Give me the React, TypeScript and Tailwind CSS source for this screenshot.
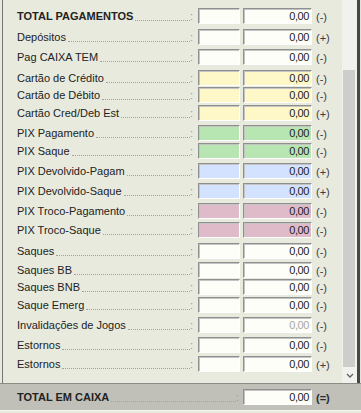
import React from "react";

type Row = {
  label: string;
  bold?: boolean;
  bg: string;
  sign: string;
  mt: string;
  dim?: boolean;
};

const WHITE = "bg-[#fefef8]";
const YELLOW = "bg-[#fef8c8]";
const GREEN = "bg-[#b8e6b3]";
const BLUE = "bg-[#d3e2fe]";
const PINK = "bg-[#dfbbca]";

const rows: Row[] = [
  { label: "TOTAL PAGAMENTOS", bold: true, bg: WHITE, sign: "(-)", mt: "mt-[8px]" },
  { label: "Depósitos", bg: WHITE, sign: "(+)", mt: "mt-[5px]" },
  { label: "Pag CAIXA TEM", bg: WHITE, sign: "(-)", mt: "mt-[4px]" },
  { label: "Cartão de Crédito", bg: YELLOW, sign: "(-)", mt: "mt-[5px]" },
  { label: "Cartão de Débito", bg: YELLOW, sign: "(-)", mt: "mt-[1px]" },
  { label: "Cartão Cred/Deb Est", bg: YELLOW, sign: "(+)", mt: "mt-[2px]" },
  { label: "PIX Pagamento", bg: GREEN, sign: "(-)", mt: "mt-[4px]" },
  { label: "PIX Saque", bg: GREEN, sign: "(-)", mt: "mt-[2px]" },
  { label: "PIX Devolvido-Pagam", bg: BLUE, sign: "(+)", mt: "mt-[4px]" },
  { label: "PIX Devolvido-Saque", bg: BLUE, sign: "(+)", mt: "mt-[4px]" },
  { label: "PIX Troco-Pagamento", bg: PINK, sign: "(-)", mt: "mt-[4px]" },
  { label: "PIX Troco-Saque", bg: PINK, sign: "(-)", mt: "mt-[3px]" },
  { label: "Saques", bg: WHITE, sign: "(-)", mt: "mt-[5px]" },
  { label: "Saques BB", bg: WHITE, sign: "(-)", mt: "mt-[3px]" },
  { label: "Saques BNB", bg: WHITE, sign: "(-)", mt: "mt-[1px]" },
  { label: "Saque Emerg", bg: WHITE, sign: "(-)", mt: "mt-[2px]" },
  { label: "Invalidações de Jogos", bg: WHITE, sign: "(-)", mt: "mt-[4px]", dim: true },
  { label: "Estornos", bg: WHITE, sign: "(-)", mt: "mt-[4px]" },
  { label: "Estornos", bg: WHITE, sign: "(+)", mt: "mt-[3px]" },
];

const boxBase =
  "h-[16px] border border-t-[#8f8f8f] border-l-[#8f8f8f] border-r-[#ffffff] border-b-[#ffffff] shadow-[inset_1px_1px_0_#c4c4c4]";

function Leader({ label, bold }: { label: string; bold?: boolean }) {
  return (
    <div className="flex items-start h-[16px] min-w-0">
      <span
        className={
          "whitespace-nowrap leading-[16px] text-[#222222] " +
          (bold ? "font-bold" : "")
        }
      >
        {label}
      </span>
      <span className="flex-1 ml-[2px] h-[13px] border-b border-dotted border-[#a2a2a2]" />
      <span className="leading-[16px] text-[#9a9a9a]">:</span>
    </div>
  );
}

function RowView({ r }: { r: Row }) {
  return (
    <div className={"flex items-start h-[16px] " + r.mt}>
      <div className="w-[176px]">
        <Leader label={r.label} bold={r.bold} />
      </div>
      <div className={boxBase + " ml-[5px] w-[42px] " + r.bg} />
      <div
        className={
          boxBase +
          " ml-[3px] w-[69px] flex items-start justify-end pr-[2px] " +
          r.bg
        }
      >
        <span
          className={
            "leading-[14px] tracking-[-0.4px] " +
            (r.dim ? "text-[#a6a6a6]" : "text-[#222222]")
          }
        >
          0,00
        </span>
      </div>
      <span className="ml-[4px] leading-[16px] pt-[1px] text-[#3c3c48]">
        {r.sign}
      </span>
    </div>
  );
}

export default function App() {
  return (
    <div className="w-[361px] h-[413px] bg-[#e9eade] flex flex-col overflow-hidden font-['Liberation_Sans',Arial,sans-serif] text-[11px]">
      <div className="flex h-[383px]">
        <div className="w-[2px]" />
        <div className="w-px bg-[#767676]" />
        <div className="w-[339px] pl-[14px] flex flex-col">
          {rows.map((r, i) => (
            <RowView key={i} r={r} />
          ))}
        </div>
        {/* scrollbar */}
        <div className="w-[15px] bg-[#f1f1ed] flex flex-col">
          <div className="h-[70px]" />
          <div className="h-[297px] ml-px w-[12px] bg-[#cdcdcb]" />
          <div className="flex-1 flex items-center justify-center pl-px">
            <svg width="8" height="5" viewBox="0 0 8 5">
              <path d="M1 1 L4 4 L7 1" fill="none" stroke="#606060" strokeWidth="1.3" />
            </svg>
          </div>
        </div>
        <div className="w-[3px] bg-[#474747]" />
        <div className="w-px bg-[#e0e0dc]" />
      </div>
      <div className="h-[27px] border-t border-[#8c8c86] bg-[#c0c0b8] flex items-center pl-[17px]">
        <div className="w-[222px]">
          <Leader label="TOTAL EM CAIXA" bold />
        </div>
        <div
          className={
            boxBase +
            " ml-[4px] w-[69px] flex items-start justify-end pr-[2px] bg-[#fefef8]"
          }
        >
          <span className="leading-[14px] tracking-[-0.4px] text-[#222222]">0,00</span>
        </div>
        <span className="ml-[4px] leading-[16px] pt-[1px] font-bold text-[#2a2a34]">
          (=)
        </span>
      </div>
      <div className="h-px bg-[#f6f6f2]" />
      <div className="flex-1" />
    </div>
  );
}
